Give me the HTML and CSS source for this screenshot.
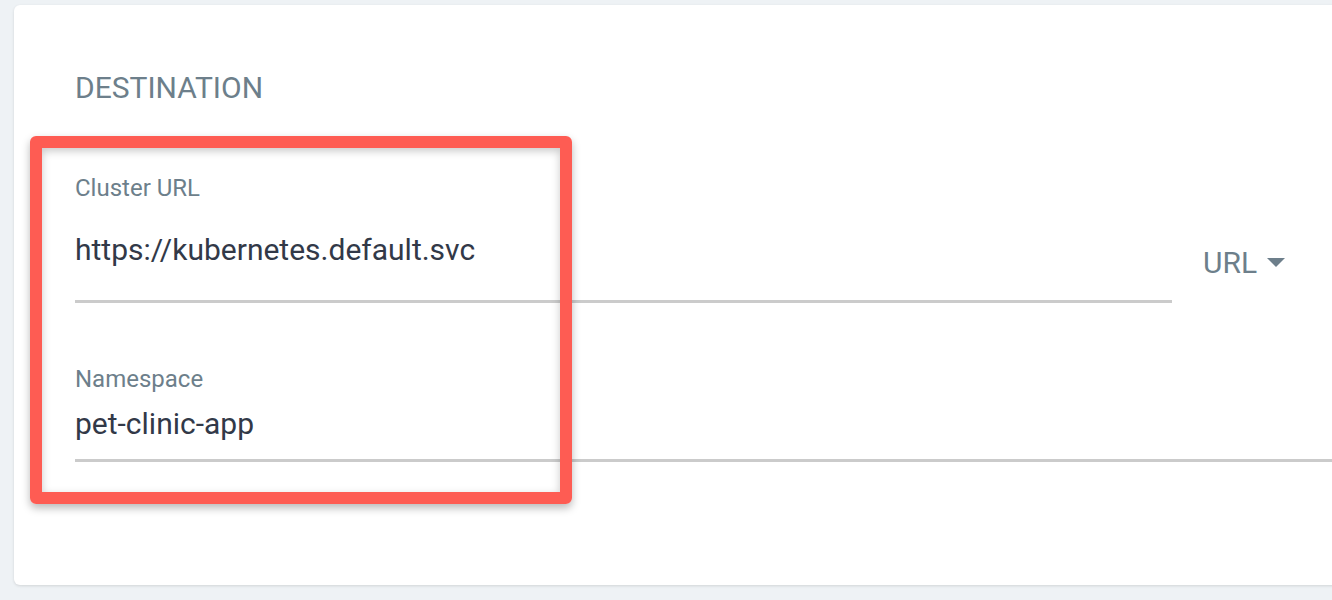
FILE: index.html
```html
<!DOCTYPE html>
<html>
<head>
<meta charset="utf-8">
<link rel="stylesheet" href="styles.css">
</head>
<body>
<div class="card">
  <h2 class="title">DESTINATION</h2>
  <div class="row row-cluster">
    <div class="field field-cluster">
      <div class="label">Cluster URL</div>
      <div class="value value-cluster">https://kubernetes.default.svc</div>
    </div>
    <div class="select">
      <span>URL</span>
      <svg class="caret" width="18" height="9" viewBox="0 0 18 9"><path d="M0 0 L18 0 L9 9 Z" fill="#6d7f8b"/></svg>
    </div>
  </div>
  <div class="row">
    <div class="field field-ns">
      <div class="label">Namespace</div>
      <div class="value value-ns">pet-clinic-app</div>
    </div>
  </div>
</div>
<div class="annotation"></div>
</body>
</html>
```
FILE: styles.css
```css
html, body {
  margin: 0;
  padding: 0;
}
body {
  background: #eef2f5;
  width: 1332px;
  height: 600px;
  overflow: hidden;
  position: relative;
  font-family: Roboto, "Liberation Sans", sans-serif;
}
.card {
  margin: 5px 0 0 14px;
  width: 1440px;
  height: 580px;
  box-sizing: border-box;
  background: #ffffff;
  border-radius: 6px;
  box-shadow: 0 1px 3px rgba(0, 0, 0, 0.12);
  padding: 65px 0 0 61px;
}
.title {
  margin: 0;
  font-size: 30px;
  line-height: 36px;
  font-weight: 400;
  color: #6d7f8b;
}
.row {
  display: flex;
  align-items: flex-start;
}
.row-cluster {
  margin-top: 68px;
}
.field-cluster {
  width: 1097px;
  border-bottom: 3px solid #cbcbcb;
  padding-bottom: 32px;
}
.field-ns {
  flex: 1;
  margin-top: 62px;
  border-bottom: 3px solid #cbcbcb;
  padding-bottom: 17px;
}
.label {
  font-size: 24px;
  line-height: 28px;
  color: #6d7f8b;
}
.value {
  font-size: 30px;
  line-height: 36px;
  color: #323948;
}
.value-cluster {
  margin-top: 30px;
}
.value-ns {
  margin-top: 13px;
}
.select {
  margin-left: 31px;
  margin-top: 71px;
  display: flex;
  align-items: center;
  gap: 10px;
  font-size: 30px;
  line-height: 36px;
  color: #6d7f8b;
}
.caret {
  display: block;
  margin-top: -2px;
}
.annotation {
  position: absolute;
  left: 30px;
  top: 136px;
  width: 542px;
  height: 368px;
  box-sizing: border-box;
  border: 12px solid #fe5c53;
  border-radius: 6px;
  box-shadow: 0 4px 9px rgba(0, 0, 0, 0.28), inset 0 3px 8px rgba(0, 0, 0, 0.22);
}
```
